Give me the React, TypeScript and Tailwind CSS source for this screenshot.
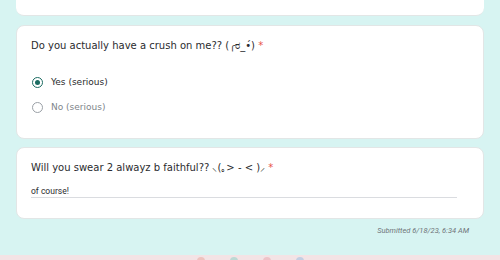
export default function App() {
  return (
    <div className="w-[500px] h-[260px] overflow-hidden bg-[#d7f4f2] flex flex-col" style={{ fontFamily: '"DejaVu Sans", sans-serif' }}>
      <div className="px-4 flex flex-col">
        <div className="-mt-2 h-[24px] bg-white rounded-b-lg border-b border-[#e2e6e6]" />
        <div className="mt-[9px] h-[114px] bg-white rounded-lg border border-[#e2e6e6] px-[14px] pt-[12px]">
          <div className="text-[10px] text-[#2a2b2e] leading-[16px]">
            Do you actually have a crush on me?? (╭ರ_•́) <span className="text-[#e8534a]">*</span>
          </div>
          <div className="mt-[21px] flex flex-col gap-[11px]">
            <label className="flex items-center gap-[8px] pl-[1px]">
              <span className="w-[11px] h-[11px] rounded-full border-[1.5px] border-[#1b6b61] flex items-center justify-center">
                <span className="w-[5px] h-[5px] rounded-full bg-[#1b6b61]" />
              </span>
              <span className="text-[9px] text-[#2a2b2e] leading-[14px]">Yes (serious)</span>
            </label>
            <label className="flex items-center gap-[8px] pl-[1px]">
              <span className="w-[11px] h-[11px] rounded-full border border-[#9aa0a6]" />
              <span className="text-[9px] text-[#80868b] leading-[14px]">No (serious)</span>
            </label>
          </div>
        </div>
        <div className="mt-[8px] h-[72px] bg-white rounded-lg border border-[#e2e6e6] px-[14px] pt-[12px]">
          <div className="text-[10px] text-[#2a2b2e] leading-[16px]">
            Will you swear 2 alwayz b faithful?? ⸜(｡&gt; - &lt; )⸝ <span className="text-[#e8534a]">*</span>
          </div>
          <div className="mt-[9px] mr-[12px] border-b border-[#dadce0] text-[8.5px] text-[#2a2b2e] leading-[12px]" style={{ fontFamily: 'Roboto, sans-serif' }}>
            of course!
          </div>
        </div>
        <div className="mt-[7px] pr-[15px] text-right text-[7.5px] leading-[10px] italic text-[#70757a]" style={{ fontFamily: 'Roboto, sans-serif' }}>
          Submitted 6/18/23, 6:34 AM
        </div>
      </div>
      <div className="mt-auto h-[5px] bg-[#f3e3e5] relative">
        <span className="absolute left-[197px] top-[2px] w-[8px] h-[8px] rounded-full bg-[#eec3bf]" />
        <span className="absolute left-[230px] top-[2px] w-[8px] h-[8px] rounded-full bg-[#bcd9d4]" />
        <span className="absolute left-[263px] top-[2px] w-[8px] h-[8px] rounded-full bg-[#eec3c8]" />
        <span className="absolute left-[296px] top-[2px] w-[8px] h-[8px] rounded-full bg-[#c3cfe3]" />
      </div>
    </div>
  );
}
